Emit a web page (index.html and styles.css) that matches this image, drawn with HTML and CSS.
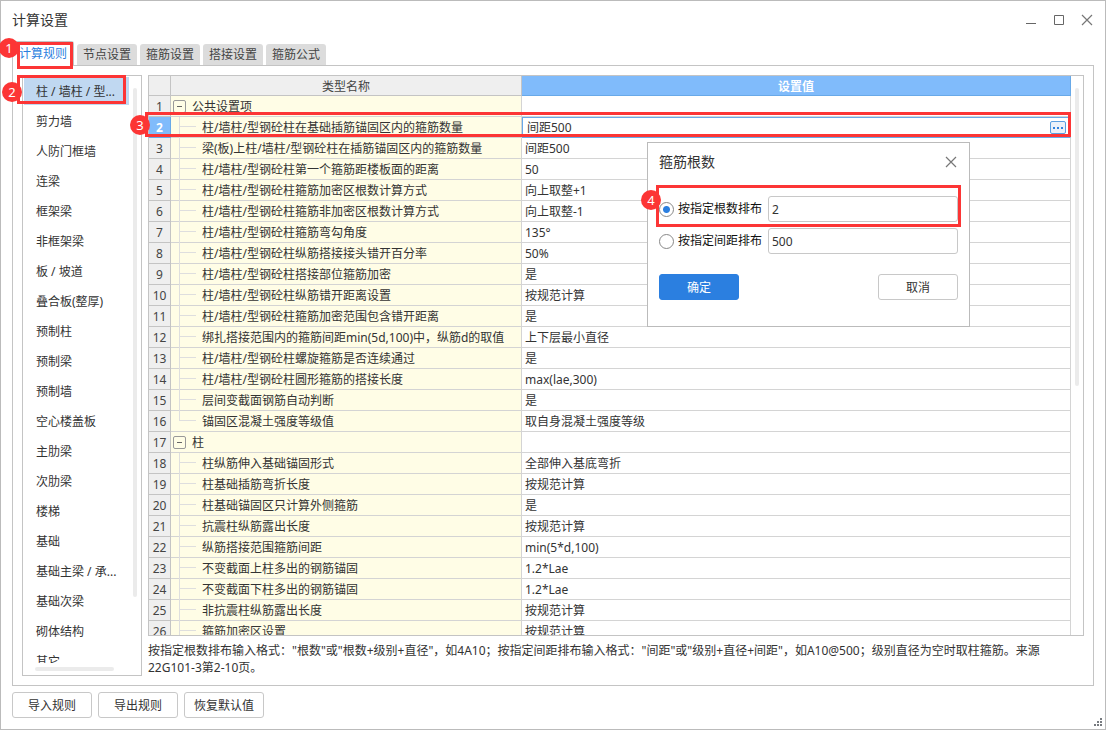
FILE: index.html
```html
<!DOCTYPE html>
<html lang="zh-CN">
<head>
<meta charset="utf-8">
<title>计算设置</title>
<link rel="stylesheet" href="styles.css">
</head>
<body>
<div class="window">
  <header class="titlebar">
    <h1 class="title">计算设置</h1>
    <div class="window-controls">
      <button class="icon-btn" aria-label="最小化"><svg width="12" height="12"><path d="M1 9.5h10" stroke="#666"/></svg></button>
      <button class="icon-btn" aria-label="最大化"><svg width="12" height="12"><path d="M1.5 1.5h9v9h-9z" stroke="#666" fill="none"/></svg></button>
      <button class="icon-btn" aria-label="关闭"><svg width="12" height="12"><path d="M1 1l10 10M11 1L1 11" stroke="#777" stroke-width="1.2"/></svg></button>
    </div>
  </header>

  <nav class="tabs">
    <button class="tab tab-active">计算规则<span class="mark mark-tab"></span><span class="badge badge-tab">1</span></button>
    <button class="tab">节点设置</button>
    <button class="tab">箍筋设置</button>
    <button class="tab">搭接设置</button>
    <button class="tab">箍筋公式</button>
  </nav>

  <main class="panel">
    <aside class="sidebar">
      <ul class="categories">
        <li class="category category-selected">柱 / 墙柱 / 型...</li>
        <li class="category">剪力墙</li>
        <li class="category">人防门框墙</li>
        <li class="category">连梁</li>
        <li class="category">框架梁</li>
        <li class="category">非框架梁</li>
        <li class="category">板 / 坡道</li>
        <li class="category">叠合板(整厚)</li>
        <li class="category">预制柱</li>
        <li class="category">预制梁</li>
        <li class="category">预制墙</li>
        <li class="category">空心楼盖板</li>
        <li class="category">主肋梁</li>
        <li class="category">次肋梁</li>
        <li class="category">楼梯</li>
        <li class="category">基础</li>
        <li class="category">基础主梁 / 承...</li>
        <li class="category">基础次梁</li>
        <li class="category">砌体结构</li>
        <li class="category">其它</li>
      </ul>
      <span class="scroll scroll-side"></span>
      <span class="scroll scroll-bottom"></span>
      <span class="mark mark-category"></span>
      <span class="badge badge-category">2</span>
    </aside>

    <section class="content">
      <div class="grid-area">
        <div class="grid">
          <table class="settings">
            <colgroup><col class="col-index"><col class="col-name"><col></colgroup>
            <thead><tr><th></th><th>类型名称</th><th class="head-value">设置值</th></tr></thead>
            <tbody>
              <tr><th>1</th><td class="group"><button class="toggle" aria-label="折叠"></button>公共设置项</td><td></td></tr>
              <tr class="current"><th>2</th><td class="leaf">柱/墙柱/型钢砼柱在基础插筋锚固区内的箍筋数量</td><td><div class="editor">间距500<button class="more" aria-label="更多"><svg width="10" height="2"><path d="M0 0h2v2H0zM4 0h2v2H4zM8 0h2v2H8z" fill="#2f82dd"/></svg></button></div></td></tr>
              <tr><th>3</th><td class="leaf">梁(板)上柱/墙柱/型钢砼柱在插筋锚固区内的箍筋数量</td><td>间距500</td></tr>
              <tr><th>4</th><td class="leaf">柱/墙柱/型钢砼柱第一个箍筋距楼板面的距离</td><td>50</td></tr>
              <tr><th>5</th><td class="leaf">柱/墙柱/型钢砼柱箍筋加密区根数计算方式</td><td>向上取整+1</td></tr>
              <tr><th>6</th><td class="leaf">柱/墙柱/型钢砼柱箍筋非加密区根数计算方式</td><td>向上取整-1</td></tr>
              <tr><th>7</th><td class="leaf">柱/墙柱/型钢砼柱箍筋弯勾角度</td><td>135°</td></tr>
              <tr><th>8</th><td class="leaf">柱/墙柱/型钢砼柱纵筋搭接接头错开百分率</td><td>50%</td></tr>
              <tr><th>9</th><td class="leaf">柱/墙柱/型钢砼柱搭接部位箍筋加密</td><td>是</td></tr>
              <tr><th>10</th><td class="leaf">柱/墙柱/型钢砼柱纵筋错开距离设置</td><td>按规范计算</td></tr>
              <tr><th>11</th><td class="leaf">柱/墙柱/型钢砼柱箍筋加密范围包含错开距离</td><td>是</td></tr>
              <tr><th>12</th><td class="leaf">绑扎搭接范围内的箍筋间距min(5d,100)中，纵筋d的取值</td><td>上下层最小直径</td></tr>
              <tr><th>13</th><td class="leaf">柱/墙柱/型钢砼柱螺旋箍筋是否连续通过</td><td>是</td></tr>
              <tr><th>14</th><td class="leaf">柱/墙柱/型钢砼柱圆形箍筋的搭接长度</td><td>max(lae,300)</td></tr>
              <tr><th>15</th><td class="leaf">层间变截面钢筋自动判断</td><td>是</td></tr>
              <tr><th>16</th><td class="leaf leaf-last">锚固区混凝土强度等级值</td><td>取自身混凝土强度等级</td></tr>
              <tr><th>17</th><td class="group"><button class="toggle" aria-label="折叠"></button>柱</td><td></td></tr>
              <tr><th>18</th><td class="leaf">柱纵筋伸入基础锚固形式</td><td>全部伸入基底弯折</td></tr>
              <tr><th>19</th><td class="leaf">柱基础插筋弯折长度</td><td>按规范计算</td></tr>
              <tr><th>20</th><td class="leaf">柱基础锚固区只计算外侧箍筋</td><td>是</td></tr>
              <tr><th>21</th><td class="leaf">抗震柱纵筋露出长度</td><td>按规范计算</td></tr>
              <tr><th>22</th><td class="leaf">纵筋搭接范围箍筋间距</td><td>min(5*d,100)</td></tr>
              <tr><th>23</th><td class="leaf">不变截面上柱多出的钢筋锚固</td><td>1.2*Lae</td></tr>
              <tr><th>24</th><td class="leaf">不变截面下柱多出的钢筋锚固</td><td>1.2*Lae</td></tr>
              <tr><th>25</th><td class="leaf">非抗震柱纵筋露出长度</td><td>按规范计算</td></tr>
              <tr><th>26</th><td class="leaf">箍筋加密区设置</td><td>按规范计算</td></tr>
            </tbody>
          </table>
          <span class="scroll scroll-grid"></span>
        </div>
        <span class="mark mark-row"></span>
        <span class="badge badge-row">3</span>

        <form class="dialog" role="dialog" aria-labelledby="dialog-title">
          <div class="dialog-head">
            <h2 class="title" id="dialog-title">箍筋根数</h2>
            <button type="button" class="icon-btn" aria-label="关闭"><svg width="12" height="12"><path d="M1 1l10 10M11 1L1 11" stroke="#777" stroke-width="1.2"/></svg></button>
          </div>
          <div class="option">
            <input type="radio" class="radio" name="mode" id="by-count" checked>
            <label for="by-count">按指定根数排布</label>
            <input type="text" class="field" value="2" aria-label="根数">
            <span class="mark mark-option"></span>
            <span class="badge badge-option">4</span>
          </div>
          <div class="option">
            <input type="radio" class="radio" name="mode" id="by-spacing">
            <label for="by-spacing">按指定间距排布</label>
            <input type="text" class="field" value="500" aria-label="间距">
          </div>
          <div class="dialog-actions">
            <button type="button" class="btn btn-primary">确定</button>
            <button type="button" class="btn">取消</button>
          </div>
        </form>
      </div>
      <p class="hint">按指定根数排布输入格式："根数"或"根数+级别+直径"，如4A10；按指定间距排布输入格式："间距"或"级别+直径+间距"，如A10@500；级别直径为空时取柱箍筋。来源22G101-3第2-10页。</p>
    </section>
  </main>

  <footer class="footer">
    <button class="btn">导入规则</button>
    <button class="btn">导出规则</button>
    <button class="btn">恢复默认值</button>
    <svg class="grip" width="8" height="8"><path d="M6 0h2v2H6zM3 3h2v2H3zM6 3h2v2H6zM0 6h2v2H0zM3 6h2v2H3zM6 6h2v2H6z" fill="#777b80"/></svg>
  </footer>
</div>
</body>
</html>
```
FILE: styles.css
```css
* { box-sizing: border-box; }

body {
  margin: 0;
  background: #fff;
  color: #333;
  font: 12px/20px "Noto Sans", "Noto Sans CJK SC", sans-serif;
}

button, input { font: inherit; color: inherit; margin: 0; padding: 0; }

.window {
  display: flex;
  flex-direction: column;
  height: 100vh;
  padding: 0 11px;
  border: 1px solid #bbb;
}

.titlebar {
  display: flex;
  align-items: center;
  justify-content: space-between;
  height: 39px;
  padding: 0 1px 2px 0;
}

.title { margin: 0; font-size: 14px; font-weight: 400; }

.window-controls { display: flex; gap: 16px; }

.icon-btn { display: block; width: 12px; height: 12px; border: 0; background: none; }
.icon-btn svg { display: block; }

.tabs { display: flex; align-items: flex-end; gap: 3px; height: 25px; }

.tab {
  width: 60px;
  height: 21px;
  border: 0;
  border-radius: 3px 3px 0 0;
  background: #dcdcdc;
  color: #444;
}

.tab-active {
  position: relative;
  z-index: 1;
  width: 62px;
  height: 25px;
  margin-bottom: -1px;
  background: #fff;
  border: 1px solid #c4c4c4;
  border-bottom: 0;
  color: #2b7fe0;
}

.panel {
  display: flex;
  flex: 1;
  gap: 6px;
  min-height: 0;
  padding: 9px;
  border: 1px solid #c4c4c4;
}

.sidebar {
  position: relative;
  flex: none;
  width: 120px;
  padding: 1px 12px 12px 1px;
  border: 1px solid #c4c4c4;
}

.categories { height: 100%; margin: 0; padding: 0; list-style: none; overflow: hidden; }
.category { height: 30px; padding-left: 12px; line-height: 30px; white-space: nowrap; }
.category-selected { height: 28px; margin-bottom: 2px; background: #c0d8f1; }

.content { display: flex; flex: 1; flex-direction: column; min-width: 0; }

.grid-area { position: relative; flex: 1; min-height: 0; }

.grid {
  position: relative;
  height: 100%;
  padding-right: 12px;
  border: 1px solid #c4c4c4;
  overflow: hidden;
}

.settings { width: 100%; table-layout: fixed; border-collapse: separate; border-spacing: 0; }
.col-index { width: 22px; }
.col-name { width: 351px; }

.settings th, .settings td {
  height: 21px;
  padding: 2px 0 0;
  line-height: 18px;
  border-right: 1px solid #d4d4d4;
  border-bottom: 1px solid #d4d4d4;
  font-weight: 400;
  white-space: nowrap;
}
.settings th { background: #efefef; border-color: #c4c4c4; text-align: center; color: #444; }
.settings thead th { height: 20px; line-height: 17px; }
.settings .head-value { background: #80bbfb; border-color: #68a9e8; color: #fff; font-weight: 700; }
.settings td { padding-left: 3px; }
.settings .current th { background: #80bbfb; border-color: #68a9e8; color: #fff; font-weight: 700; }
.settings .current td:last-child { padding: 0; border-bottom-color: #68a9e8; }

.settings .group { padding-left: 2px; background: #fffde6; }

.toggle {
  width: 13px;
  height: 13px;
  margin-right: 6px;
  border: 1px solid #999;
  border-radius: 2px;
  background: linear-gradient(#666, #666) center / 5px 1px no-repeat;
  vertical-align: -1px;
}

.settings .leaf { position: relative; padding-left: 31px; background: #fffde6; }
.leaf::before { content: ""; position: absolute; top: 0; bottom: -1px; left: 8px; border-left: 1px solid #dedede; }
.leaf::after { content: ""; position: absolute; top: 9px; left: 8px; width: 17px; border-top: 1px solid #dedede; }
.leaf-last::before { bottom: 10px; }

.editor {
  display: flex;
  align-items: center;
  justify-content: space-between;
  height: 20px;
  padding: 0 4px;
  border-top: 1px solid #68a9e8;
  border-left: 1px solid #68a9e8;
}

.more {
  display: flex;
  align-items: center;
  justify-content: center;
  width: 16px;
  height: 13px;
  border: 1px solid #5a9fe0;
  border-radius: 2px;
  background: #eaf1fa;
}

.scroll { position: absolute; border-radius: 2px; background: #ebebeb; }
.scroll-side { top: 12px; right: 4px; bottom: 78px; width: 4px; }
.scroll-bottom { left: 12px; right: 27px; bottom: 4px; height: 4px; }
.scroll-grid { top: 12px; right: 4px; width: 4px; height: 298px; }

.hint { height: 40px; margin: 0; padding-top: 6px; line-height: 17px; }

.footer { display: flex; position: relative; gap: 6px; padding: 6px 0 11px; }

.btn { width: 80px; height: 26px; padding-top: 2px; border: 1px solid #c8c8c8; border-radius: 3px; background: #fff; }
.btn-primary { border-color: #2b7fe0; background: #2b7fe0; color: #fff; }

.grip { position: absolute; right: -8px; bottom: 3px; }

.dialog {
  position: absolute;
  top: 67px;
  left: 499px;
  width: 323px;
  padding: 8px 11px 26px;
  border: 1px solid #bbb;
  background: #fff;
}

.dialog-head { display: flex; align-items: center; justify-content: space-between; height: 22px; margin-bottom: 23px; }
.dialog-head .icon-btn { margin-right: 1px; }

.option { display: flex; position: relative; align-items: center; gap: 4px; margin-bottom: 6px; color: #111; }
.option label { flex: 1; white-space: nowrap; }

.radio {
  appearance: none;
  width: 15px;
  height: 15px;
  border: 1px solid #888;
  border-radius: 50%;
  background: #fff;
}
.radio:checked { background: radial-gradient(circle, #2b7fe0 3px, #fff 4px); }

.field {
  width: 190px;
  height: 26px;
  padding: 0 3px;
  border: 1px solid #c8c8c8;
  border-radius: 3px;
  color: #333;
}

.dialog-actions { display: flex; justify-content: space-between; padding-top: 14px; }

/* Step annotations */
.mark { position: absolute; border: 3px solid #fc3535; pointer-events: none; }
.mark-tab { top: 0; left: 4px; width: 56px; height: 27px; }
.mark-category { top: -1px; left: -6px; width: 109px; height: 29px; }
.mark-row { top: 37px; left: -3px; right: 13px; height: 25px; }
.mark-option { top: -11px; left: -3px; right: -3px; height: 42px; }

.badge {
  position: absolute;
  width: 20px;
  height: 20px;
  border-radius: 50%;
  background: #fc3535;
  color: #fff;
  font-size: 13px;
  line-height: 20px;
  text-align: center;
}
.badge-tab { top: -4px; left: -14px; }
.badge-category { top: 6px; left: -21px; }
.badge-row { top: 40px; left: -18px; }
.badge-option { top: -6px; left: -18px; }
```
